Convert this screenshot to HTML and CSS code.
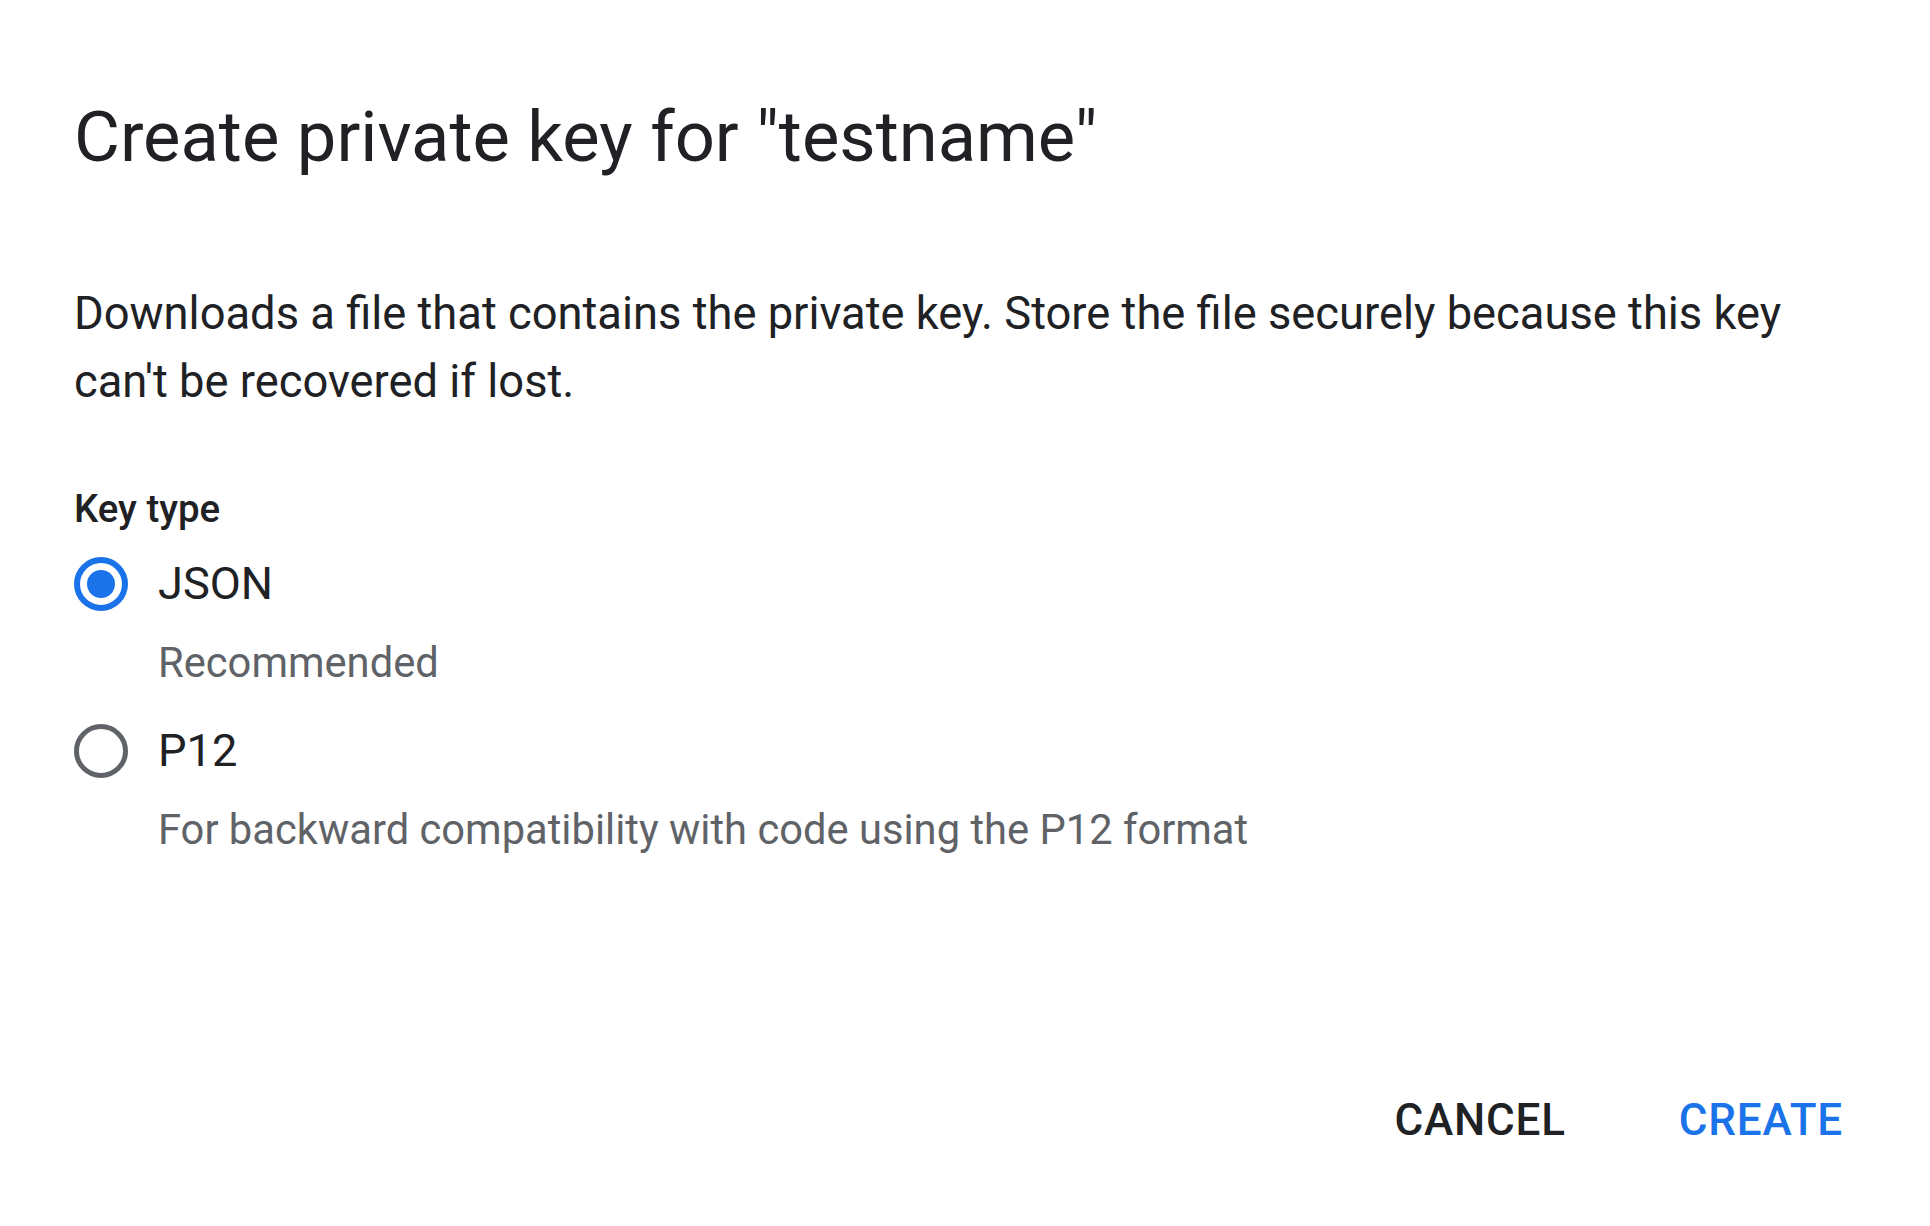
FILE: index.html
```html
<!DOCTYPE html>
<html lang="en">
<head>
<meta charset="utf-8">
<title>Create private key</title>
<link rel="stylesheet" href="styles.css">
</head>
<body>
<div class="dialog">
  <h1 class="title">Create private key for "testname"</h1>
  <p class="body-text">Downloads a file that contains the private key. Store the file securely because this key can't be recovered if lost.</p>
  <div class="group-label">Key type</div>
  <div class="option">
    <div class="option-row">
      <span class="radio radio-checked"><span class="radio-dot"></span></span>
      <span class="option-label">JSON</span>
    </div>
    <div class="option-desc">Recommended</div>
  </div>
  <div class="option option-second">
    <div class="option-row">
      <span class="radio"></span>
      <span class="option-label">P12</span>
    </div>
    <div class="option-desc">For backward compatibility with code using the P12 format</div>
  </div>
  <div class="actions">
    <button class="btn btn-cancel">CANCEL</button>
    <button class="btn btn-create">CREATE</button>
  </div>
</div>
</body>
</html>
```

FILE: styles.css
```css
html, body {
  margin: 0;
  padding: 0;
  background: #ffffff;
}

body {
  font-family: Roboto, "Liberation Sans", Arial, sans-serif;
  color: #202124;
  width: 1930px;
  height: 1226px;
  overflow: hidden;
}

.dialog {
  padding: 89px 74px 0 74px;
}

.title {
  margin: 0;
  font-size: 70.5px;
  font-weight: 400;
  line-height: 96px;
  color: #202124;
}

.body-text {
  margin: 95px 0 0 0;
  font-size: 45.3px;
  line-height: 68px;
  color: #202124;
}

.group-label {
  margin-top: 67px;
  font-size: 38.4px;
  line-height: 52px;
  font-weight: 500;
  color: #202124;
}

.option {
  margin-top: 15px;
}

.option-second {
  margin-top: 24px;
}

.option-row {
  display: flex;
  align-items: center;
  height: 68px;
}

.radio {
  box-sizing: border-box;
  width: 54px;
  height: 54px;
  border-radius: 50%;
  border: 5px solid #5f6368;
  display: flex;
  align-items: center;
  justify-content: center;
  flex: none;
}

.radio-checked {
  border: 6px solid #1a73e8;
}

.radio-dot {
  width: 28px;
  height: 28px;
  border-radius: 50%;
  background: #1a73e8;
}

.option-label {
  margin-left: 30px;
  font-size: 45.2px;
  line-height: 68px;
  color: #202124;
}

.option-desc {
  margin: 15px 0 0 84px;
  font-size: 41.7px;
  line-height: 60px;
  color: #5f6368;
}

.actions {
  display: flex;
  justify-content: flex-end;
  gap: 113px;
  margin-top: 230px;
  padding-right: 13px;
}

.btn {
  background: none;
  border: none;
  padding: 0;
  margin: 0;
  font-family: Roboto, "Liberation Sans", Arial, sans-serif;
  font-size: 44px;
  line-height: 60px;
  font-weight: 500;
  letter-spacing: 0.8px;
  cursor: pointer;
}

.btn-cancel {
  color: #202124;
}

.btn-create {
  color: #1a73e8;
}
```
